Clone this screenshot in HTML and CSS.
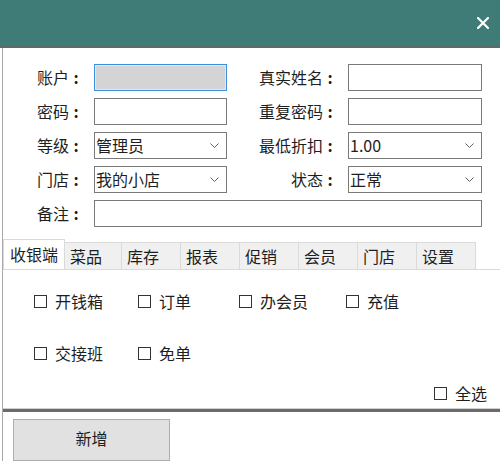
FILE: index.html
```html
<!DOCTYPE html>
<html lang="zh">
<head>
<meta charset="utf-8">
<link rel="stylesheet" href="styles.css">
</head>
<body>
<div class="window">
  <div class="titlebar">
    <svg class="close" width="12" height="12" viewBox="0 0 12 12"><path d="M1 1 L11 11 M11 1 L1 11" stroke="#fff" stroke-width="2.2" stroke-linecap="square"/></svg>
  </div>
  <div class="content">
    <div class="form">
      <label class="lbl">账户<span class="colon">:</span></label>
      <div class="field field-disabled"></div>
      <label class="lbl">真实姓名<span class="colon">:</span></label>
      <div class="field"></div>

      <label class="lbl">密码<span class="colon">:</span></label>
      <div class="field"></div>
      <label class="lbl">重复密码<span class="colon">:</span></label>
      <div class="field"></div>

      <label class="lbl">等级<span class="colon">:</span></label>
      <div class="field select"><span>管理员</span><svg class="chev" width="9" height="5" viewBox="0 0 9 5"><path d="M0.5 0.5 L4.5 4.5 L8.5 0.5" fill="none" stroke="#606060" stroke-width="1"/></svg></div>
      <label class="lbl">最低折扣<span class="colon">:</span></label>
      <div class="field select"><span>1.00</span><svg class="chev" width="9" height="5" viewBox="0 0 9 5"><path d="M0.5 0.5 L4.5 4.5 L8.5 0.5" fill="none" stroke="#606060" stroke-width="1"/></svg></div>

      <label class="lbl">门店<span class="colon">:</span></label>
      <div class="field select"><span>我的小店</span><svg class="chev" width="9" height="5" viewBox="0 0 9 5"><path d="M0.5 0.5 L4.5 4.5 L8.5 0.5" fill="none" stroke="#606060" stroke-width="1"/></svg></div>
      <label class="lbl">状态<span class="colon">:</span></label>
      <div class="field select"><span>正常</span><svg class="chev" width="9" height="5" viewBox="0 0 9 5"><path d="M0.5 0.5 L4.5 4.5 L8.5 0.5" fill="none" stroke="#606060" stroke-width="1"/></svg></div>

      <label class="lbl">备注<span class="colon">:</span></label>
      <div class="field wide"></div>
    </div>

    <div class="tabs">
      <div class="tab active">收银端</div>
      <div class="tab">菜品</div>
      <div class="tab">库存</div>
      <div class="tab">报表</div>
      <div class="tab">促销</div>
      <div class="tab">会员</div>
      <div class="tab">门店</div>
      <div class="tab">设置</div>
    </div>
    <div class="panel">
      <div class="checks">
        <div class="chk"><span class="box"></span>开钱箱</div>
        <div class="chk"><span class="box"></span>订单</div>
        <div class="chk"><span class="box"></span>办会员</div>
        <div class="chk"><span class="box"></span>充值</div>
        <div class="chk"><span class="box"></span>交接班</div>
        <div class="chk"><span class="box"></span>免单</div>
      </div>
      <div class="selectall">
        <div class="chk"><span class="box"></span>全选</div>
      </div>
    </div>
    <div class="footer">
      <button class="btn">新增</button>
    </div>
  </div>
</div>
</body>
</html>
```

FILE: styles.css
```css
html, body {
  margin: 0;
  padding: 0;
  background: #ffffff;
}
body {
  font-family: "Noto Sans CJK SC", "Noto Sans", sans-serif;
  color: #1e1e1e;
  font-size: 16px;
}
.window {
  width: 500px;
  height: 461px;
  overflow: hidden;
  background: #fff;
}
.titlebar {
  height: 46px;
  background: #3f7c78;
  border-bottom: 2px solid #5d6a69;
  display: flex;
  align-items: center;
  justify-content: flex-end;
  padding-right: 11px;
  box-sizing: content-box;
}
.close {
  display: block;
}
.content {
  border-left: 1px solid #a9a9a9;
  margin-left: 2px;
  height: 413px;
  display: flex;
  flex-direction: column;
}
.form {
  display: grid;
  grid-template-columns: 78px 133px 121px 134px;
  grid-auto-rows: 27px;
  row-gap: 7px;
  padding-top: 16px;
  padding-left: 13px;
}
.lbl {
  text-align: right;
  padding-right: 11px;
  line-height: 27px;
  white-space: nowrap;
}
.colon {
  display: inline-block;
  width: 14px;
  text-align: center;
  font-weight: bold;
}
.field {
  border: 1px solid #7a7a7a;
  box-sizing: border-box;
  background: #fff;
  display: flex;
  align-items: center;
  justify-content: space-between;
  padding: 0 7px 0 6px;
  line-height: 25px;
}
.field-disabled {
  background: #d4d4d7;
  border-color: #3d8fdb;
  box-shadow: inset 0 0 0 1px #e8e8ea;
}
.select span {
  margin-left: -5px;
}
.chev {
  display: block;
}
.wide {
  grid-column: 2 / span 3;
}
.tabs {
  display: flex;
  align-items: flex-end;
  margin-top: 12px;
  height: 30px;
}
.tab {
  height: 27px;
  line-height: 26px;
  box-sizing: border-box;
  background: #f0f0f0;
  border: 1px solid #dadada;
  border-bottom: none;
  border-left: none;
  width: 59px;
  padding-left: 5px;
  white-space: nowrap;
}
.tab.active {
  height: 30px;
  line-height: 29px;
  background: #fff;
  border: 1px solid #dadada;
  border-bottom: none;
  width: 62px;
  padding-left: 6px;
}
.tab:nth-child(2) { width: 57px; }
.panel {
  border-top: 1px solid #dadada;
  height: 146px;
  border-bottom: 3px solid #6b6b6b;
  box-shadow: 0 -1px 0 #d0d0d0 inset;
}
.checks {
  display: grid;
  grid-template-columns: 104px 101px 107px auto;
  grid-auto-rows: 26px;
  row-gap: 26px;
  padding-top: 18px;
  padding-left: 31px;
}
.chk {
  display: flex;
  align-items: center;
  white-space: nowrap;
  line-height: 26px;
}
.box {
  width: 11px;
  height: 11px;
  border: 1px solid #333;
  margin-right: 8px;
  flex: none;
}
.selectall {
  display: flex;
  justify-content: flex-end;
  padding-right: 13px;
  margin-top: 14px;
}
.footer {
  padding-left: 10px;
  padding-top: 7px;
}
.btn {
  width: 157px;
  height: 42px;
  background: #e1e1e1;
  border: 1px solid #adadad;
  font-family: "Noto Sans CJK SC", "Noto Sans", sans-serif;
  font-size: 16px;
  color: #1e1e1e;
  padding: 0;
  padding-bottom: 4px;
}
```
